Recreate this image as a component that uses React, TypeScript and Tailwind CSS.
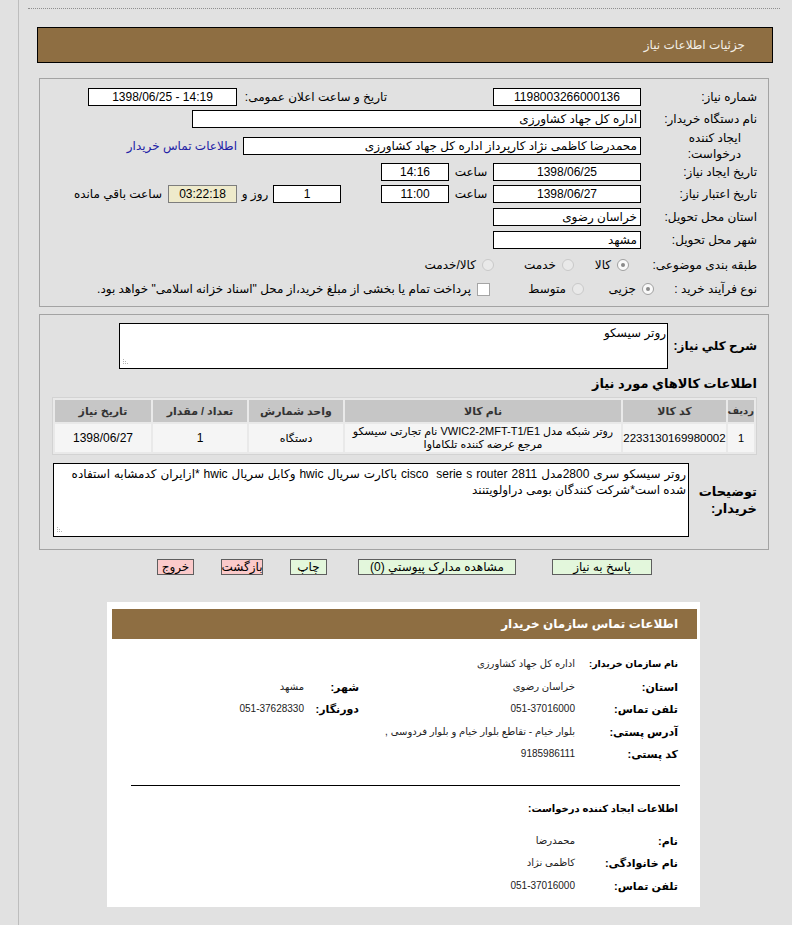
import React from "react";

function Box({
  className = "",
  children,
  center = false,
}: {
  className?: string;
  children?: React.ReactNode;
  center?: boolean;
}) {
  return (
    <div
      className={`h-[18px] shrink-0 border border-black bg-white flex items-center px-[3px] overflow-hidden whitespace-nowrap ${
        center ? "justify-center" : "justify-start"
      } ${className}`}
    >
      {children}
    </div>
  );
}

function Radio({ checked = false }: { checked?: boolean }) {
  return checked ? (
    <span className="block shrink-0 w-[12px] h-[12px] rounded-full border border-[#a0a0a0] bg-[#f9f9f9] flex items-center justify-center">
      <span className="block w-[4px] h-[4px] rounded-full bg-[#8a8a8a]" />
    </span>
  ) : (
    <span className="block shrink-0 w-[12px] h-[12px] rounded-full border border-[#c9c9c9] bg-[#e9e9e9]" />
  );
}

function Grip() {
  return (
    <svg className="absolute left-[3px] bottom-[3px]" width="8" height="8" viewBox="0 0 8 8">
      <rect x="0" y="6" width="1" height="1" fill="#b5b5b5" />
      <rect x="2" y="6" width="1" height="1" fill="#b5b5b5" />
      <rect x="4" y="6" width="1" height="1" fill="#b5b5b5" />
      <rect x="0" y="4" width="1" height="1" fill="#b5b5b5" />
      <rect x="2" y="4" width="1" height="1" fill="#b5b5b5" />
      <rect x="0" y="2" width="1" height="1" fill="#b5b5b5" />
    </svg>
  );
}

function InfoRow({
  label,
  value,
  label2,
  value2,
  small = false,
}: {
  label: string;
  value: React.ReactNode;
  label2?: string;
  value2?: React.ReactNode;
  small?: boolean;
}) {
  return (
    <div className="flex items-center h-[22.5px]">
      <div
        className={`w-[103px] shrink-0 font-bold text-black whitespace-nowrap ${small ? "text-[9.5px]" : "text-[11px]"}`}
      >
        {label}
      </div>
      <div className="w-[216px] shrink-0 text-[10px] text-[#222] whitespace-nowrap">{value}</div>
      {label2 && <div className="w-[55px] shrink-0 font-bold text-[11px] text-black whitespace-nowrap">{label2}</div>}
      {value2 && <div className="shrink-0 text-[10px] text-[#222] whitespace-nowrap">{value2}</div>}
    </div>
  );
}

export default function App() {
  return (
    <div
      dir="rtl"
      className="w-[792px] min-h-[925px] bg-[#e1e1e1] text-[12px] text-black leading-[14px] [font-family:'Liberation_Sans','DejaVu_Sans',sans-serif] overflow-hidden"
    >
      <div className="ml-[18px] border-l border-[#bdbdbd] min-h-[925px]">
        {/* top dotted rule */}
        <div className="h-[9px] ml-[9px] mr-[12px] border-b border-dotted border-[#8f8f8f]" />

        {/* title bar */}
        <div className="mt-[18px] ml-[18px] mr-[19px] h-[36px] border border-black bg-[#8e6e42] flex items-center pr-[27px] text-[#f3efe6] text-[12px]">
          جزئیات اطلاعات نیاز
        </div>

        {/* panel 1 */}
        <div className="mt-[15px] ml-[20px] mr-[23px] border border-[#a3a3a3] pt-[7px] pb-[6px] pr-[11px]">
          <div className="flex items-center h-[22px]">
            <div className="w-[116px] shrink-0">شماره نیاز:</div>
            <Box className="w-[148px]" center>
              1198003266000136
            </Box>
            <div className="w-[150px] mr-[106px] shrink-0">تاریخ و ساعت اعلان عمومی:</div>
            <Box className="w-[149px]" center>
              <span dir="ltr">1398/06/25 - 14:19</span>
            </Box>
          </div>

          <div className="flex items-center h-[22px]">
            <div className="w-[116px] shrink-0">نام دستگاه خریدار:</div>
            <Box className="w-[449px]">اداره کل جهاد کشاورزی</Box>
          </div>

          <div className="flex items-center h-[32px]">
            <div className="w-[116px] shrink-0 pr-[16px] leading-[16px]">
              ایجاد کننده
              <br />
              درخواست:
            </div>
            <Box className="w-[398px]">محمدرضا کاظمی نژاد کارپرداز اداره کل جهاد کشاورزی</Box>
            <div className="mr-[6px] text-[#2121a6] whitespace-nowrap">اطلاعات تماس خریدار</div>
          </div>

          <div className="flex items-center h-[20px]">
            <div className="w-[116px] shrink-0">تاریخ ایجاد نیاز:</div>
            <Box className="w-[148px]" center>
              1398/06/25
            </Box>
            <div className="w-[44px] shrink-0 text-center">ساعت</div>
            <Box className="w-[68px]" center>
              14:16
            </Box>
          </div>

          <div className="flex items-center h-[24px]">
            <div className="w-[116px] shrink-0">تاریخ اعتبار نیاز:</div>
            <Box className="w-[148px]" center>
              1398/06/27
            </Box>
            <div className="w-[44px] shrink-0 text-center">ساعت</div>
            <Box className="w-[68px]" center>
              11:00
            </Box>
            <Box className="w-[68px] mr-[40px]" center>
              1
            </Box>
            <div className="w-[36px] shrink-0 text-center">روز و</div>
            <div className="w-[69px] h-[18px] shrink-0 border border-[#7d7d7d] bg-[#eeeacb] flex items-center justify-center">
              03:22:18
            </div>
            <div className="mr-[6px] whitespace-nowrap">ساعت باقي مانده</div>
          </div>

          <div className="flex items-center h-[22px]">
            <div className="w-[116px] shrink-0">استان محل تحویل:</div>
            <Box className="w-[148px]">خراسان رضوی</Box>
          </div>

          <div className="flex items-center h-[24px]">
            <div className="w-[116px] shrink-0">شهر محل تحویل:</div>
            <Box className="w-[148px]">مشهد</Box>
          </div>

          <div className="flex items-center h-[26px]">
            <div className="w-[116px] shrink-0">طبقه بندی موضوعی:</div>
            <div className="w-[66px] shrink-0 flex items-center">
              <span className="mr-[12px] flex">
                <Radio checked />
              </span>
              <span className="mr-[6px]">کالا</span>
            </div>
            <div className="w-[81px] shrink-0 flex items-center">
              <span className="mr-[1px] flex">
                <Radio />
              </span>
              <span className="mr-[6px]">خدمت</span>
            </div>
            <div className="flex items-center">
              <span className="mr-[0px] flex">
                <Radio />
              </span>
              <span className="mr-[6px]">کالا/خدمت</span>
            </div>
          </div>

          <div className="flex items-center h-[22px]">
            <div className="w-[99px] shrink-0">نوع فرآیند خرید :</div>
            <div className="w-[68px] shrink-0 flex items-center">
              <span className="mr-[4px] flex">
                <Radio checked />
              </span>
              <span className="mr-[6px]">جزیی</span>
            </div>
            <div className="w-[94px] shrink-0 flex items-center">
              <span className="mr-[6px] flex">
                <Radio />
              </span>
              <span className="mr-[6px]">متوسط</span>
            </div>
            <div className="flex items-center">
              <span className="block mr-[6px] w-[13px] h-[13px] border border-[#a5a5a5] bg-white shrink-0" />
              <span className="mr-[6px] whitespace-nowrap">
                پرداخت تمام یا بخشی از مبلغ خرید،از محل "اسناد خزانه اسلامی" خواهد بود.
              </span>
            </div>
          </div>
        </div>

        {/* panel 2 */}
        <div className="mt-[7px] ml-[20px] mr-[23px] border border-[#a3a3a3] pt-[8px] pb-[12px] pr-[11px]">
          <div className="flex items-center">
            <div className="w-[89px] shrink-0 font-bold text-[12px] whitespace-nowrap">شرح کلي نیاز:</div>
            <div className="relative w-[549px] h-[46px] shrink-0 border border-black bg-white px-[1px] pt-[2px]">
              روتر سیسکو
              <Grip />
            </div>
          </div>

          <div className="mt-[7px] h-[16px] leading-[16px] font-bold text-[13px]">اطلاعات کالاهاي مورد نیاز</div>

          <table className="mt-[5px] w-[704px] table-fixed border-separate border-spacing-[2px] border border-[#d3d3d3] bg-[#e9e9e9] text-[11px]">
            <colgroup>
              <col className="w-[26px]" />
              <col className="w-[103px]" />
              <col className="w-[276px]" />
              <col className="w-[94px]" />
              <col className="w-[94px]" />
              <col className="w-[96px]" />
            </colgroup>
            <thead>
              <tr className="h-[22px]">
                <th className="bg-[#c6c6c6] font-bold text-[#333] text-[10px] px-0 whitespace-nowrap overflow-visible">ردیف</th>
                <th className="bg-[#c6c6c6] font-bold text-[#333]">کد کالا</th>
                <th className="bg-[#c6c6c6] font-bold text-[#333]">نام کالا</th>
                <th className="bg-[#c6c6c6] font-bold text-[#333]">واحد شمارش</th>
                <th className="bg-[#c6c6c6] font-bold text-[#333]">تعداد / مقدار</th>
                <th className="bg-[#c6c6c6] font-bold text-[#333]">تاریخ نیاز</th>
              </tr>
            </thead>
            <tbody>
              <tr className="h-[28px]">
                <td className="bg-[#f5f5f5] text-center">1</td>
                <td className="bg-[#f5f5f5] text-center text-[11.5px] whitespace-nowrap">2233130169980002</td>
                <td className="bg-[#f5f5f5] text-center leading-[13px]">
                  روتر شبکه مدل VWIC2-2MFT-T1/E1 نام تجارتی سیسکو
                  <br />
                  مرجع عرضه کننده تلکاماوا
                </td>
                <td className="bg-[#f5f5f5] text-center">دستگاه</td>
                <td className="bg-[#f5f5f5] text-center text-[12px]">1</td>
                <td className="bg-[#f5f5f5] text-center text-[12px]">1398/06/27</td>
              </tr>
            </tbody>
          </table>

          <div className="mt-[8px] flex items-center">
            <div className="w-[68px] shrink-0 font-bold text-[13px] leading-[17px]">
              توضیحات
              <br />
              خریدار:
            </div>
            <div className="relative w-[636px] h-[74px] shrink-0 border border-black bg-white px-[2px] pt-[2px] leading-[16px]">
              <div className="whitespace-nowrap [word-spacing:0.6px]">
                روتر سیسکو سری 2800مدل 2811 cisco&nbsp; serie s router باکارت سریال hwic وکابل سریال hwic *ازایران کدمشابه استفاده
              </div>
              <div className="whitespace-nowrap">شده است*شرکت کنندگان بومی دراولویتنند</div>
              <Grip />
            </div>
          </div>
        </div>

        {/* buttons */}
        <div className="mt-[9px] mr-[140px] flex items-center h-[16px] text-[12px]">
          <div className="w-[100px] h-[16px] shrink-0 border border-[#5e5e5e] bg-[#e3f7dc] flex items-center justify-center whitespace-nowrap">
            پاسخ به نیاز
          </div>
          <div className="w-[158px] h-[16px] mr-[36px] shrink-0 border border-[#5e5e5e] bg-[#e3f7dc] flex items-center justify-center whitespace-nowrap">
            مشاهده مدارک پیوستي (0)
          </div>
          <div className="w-[37px] h-[16px] mr-[31px] shrink-0 border border-[#5e5e5e] bg-[#e3f7dc] flex items-center justify-center whitespace-nowrap">
            چاپ
          </div>
          <div className="w-[42px] h-[16px] mr-[27px] shrink-0 border border-[#5e5e5e] bg-[#fbcaca] flex items-center justify-center whitespace-nowrap">
            بازگشت
          </div>
          <div className="w-[37px] h-[16px] mr-[27px] shrink-0 border border-[#5e5e5e] bg-[#fbcaca] flex items-center justify-center whitespace-nowrap">
            خروج
          </div>
        </div>

        {/* contact panel */}
        <div className="mt-[27px] ml-[88px] mr-[92px] bg-white pt-[7px] pb-[10px]">
          <div className="ml-[5px] mr-[3px] h-[30px] bg-[#8e6e42] flex items-center pr-[19px] text-white font-bold text-[12px]">
            اطلاعات تماس سازمان خریدار
          </div>

          <div className="mt-[14px] pr-[22px]">
            <InfoRow label="نام سازمان خریدار:" value="اداره کل جهاد کشاورزی" small />
            <InfoRow label="استان:" value="خراسان رضوی" label2="شهر:" value2="مشهد" />
            <InfoRow
              label="تلفن تماس:"
              value={<span dir="ltr">051-37016000</span>}
              label2="دورنگار:"
              value2={<span dir="ltr">051-37628330</span>}
            />
            <InfoRow label="آدرس پستی:" value="بلوار خیام - تقاطع بلوار خیام و بلوار فردوسی ," />
            <InfoRow label="کد پستی:" value="9185986111" />
          </div>

          <div className="mt-[19px] ml-[24px] mr-[20px] border-t border-black" />

          <div className="mt-[15px] pr-[22px] h-[16px] leading-[16px] font-bold text-[10px]">
            اطلاعات ایجاد کننده درخواست:
          </div>

          <div className="mt-[13px] pr-[22px]">
            <InfoRow label="نام:" value="محمدرضا" />
            <InfoRow label="نام خانوادگی:" value="کاظمی نژاد" />
            <InfoRow label="تلفن تماس:" value={<span dir="ltr">051-37016000</span>} />
          </div>
        </div>
      </div>
    </div>
  );
}
